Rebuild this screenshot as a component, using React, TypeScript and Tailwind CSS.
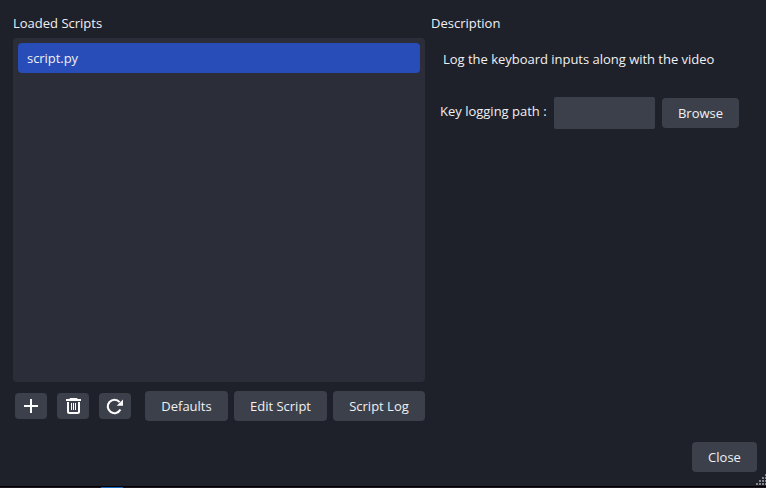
import React from "react";

function Button({ children, className }: { children: React.ReactNode; className: string }) {
  return (
    <button className={`flex h-[30px] items-center justify-center rounded-[4px] bg-[#3c404b] ${className}`}>
      {children}
    </button>
  );
}

function IconButton({ label, children }: { label: string; children: React.ReactNode }) {
  return (
    <button aria-label={label} className="h-[26px] w-8 rounded-[4px] bg-[#3c404b]">
      <svg width="32" height="26" viewBox="0 0 32 26" fill="none" stroke="#fefefe">
        {children}
      </svg>
    </button>
  );
}

const gripDots = [
  [9, 0],
  [6, 3], [9, 3],
  [3, 6], [6, 6], [9, 6],
  [0, 9], [3, 9], [6, 9], [9, 9],
];

export default function App() {
  return (
    <div className="relative flex h-[488px] w-[766px] flex-col overflow-hidden bg-[#1f212a] font-['Open_Sans',sans-serif] text-[13px] leading-[18px] whitespace-nowrap text-[#f0f0f2]">
      <div className="flex h-[421px] pt-[14px] pl-[13px]">
        <section className="flex w-[412px] flex-col">
          <h2>Loaded Scripts</h2>
          <div className="mt-[6px] h-[344px] rounded-[4px] bg-[#2b2d38] p-[5px]">
            <div className="flex h-[30px] items-center rounded-[4px] bg-[#284cb8] pl-[9px] tracking-[-0.05px]">script.py</div>
          </div>
          <div className="mt-[9px] flex items-center pl-[2px]">
            <div className="flex gap-[10px]">
              <IconButton label="Add">
                <path d="M16 6v14M9 13h14" strokeWidth="2" />
              </IconButton>
              <IconButton label="Remove">
                <path d="M9 7h15" strokeWidth="2" />
                <path d="M12.7 5.5h7.6" strokeWidth="1" />
                <path d="M11 9v9.5a1.5 1.5 0 0 0 1.5 1.5h8a1.5 1.5 0 0 0 1.5-1.5V9" strokeWidth="2" />
                <path d="M14.5 10v7M16.5 10v7M18.5 10v7" strokeWidth="1" />
              </IconButton>
              <IconButton label="Reload">
                <path d="M20.6 9.2A6.7 6.7 0 1 0 21.4 16.6" strokeWidth="2.1" />
                <path d="M24 6.5v6.3h-6.3z" fill="#fefefe" stroke="none" />
              </IconButton>
            </div>
            <div className="ml-[14px] flex gap-[6px]">
              <Button className="w-[83px]">Defaults</Button>
              <Button className="w-[93px]">Edit Script</Button>
              <Button className="w-[92px]">Script Log</Button>
            </div>
          </div>
        </section>
        <section className="ml-[6px] flex flex-1 flex-col">
          <h2>Description</h2>
          <p className="mt-[18px] pl-3 tracking-[-0.02px]">Log the keyboard inputs along with the video</p>
          <div className="mt-[29px] flex h-8 pl-[9px]">
            <label htmlFor="path" className="w-[114px] pt-[5px]">Key logging path :</label>
            <input id="path" className="h-8 w-[101px] rounded-[2px] bg-[#3c404b]" />
            <Button className="mt-px ml-[7px] w-[77px]">Browse</Button>
          </div>
        </section>
      </div>
      <div className="mt-[21px] flex h-11 justify-end pr-[9px]">
        <Button className="w-[65px]">Close</Button>
      </div>
      <div className="h-px bg-black" />
      <div className="h-px bg-[#1c1520] pl-[101px]">
        <div className="h-px w-[22px] bg-[#1c67c0]" />
      </div>
      <svg className="absolute top-[474px] left-[756px]" width="10" height="12" fill="#85868b">
        {gripDots.map(([x, y]) => (
          <rect key={`${x}-${y}`} x={x} y={y} width="2" height="2" />
        ))}
      </svg>
    </div>
  );
}
